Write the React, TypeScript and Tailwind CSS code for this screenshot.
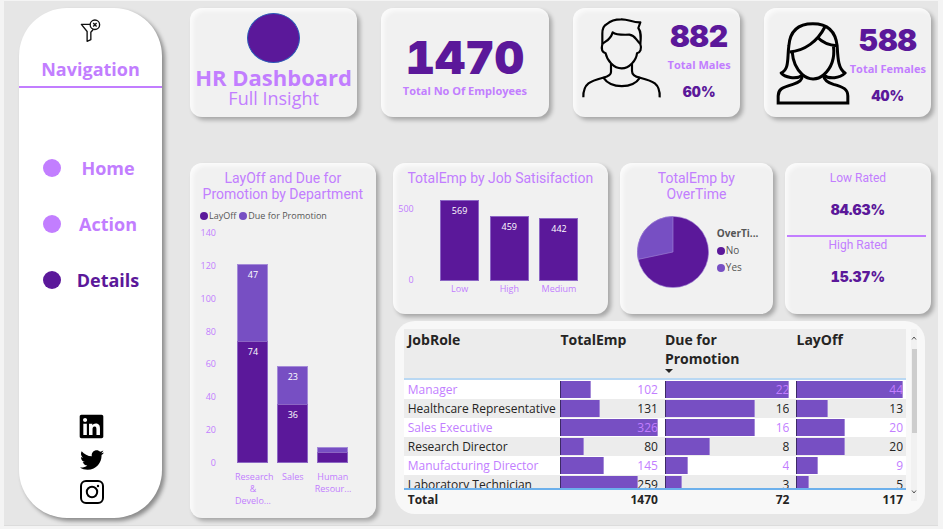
import type { ReactNode } from "react";
import { FaLinkedin, FaTwitter } from "react-icons/fa";

const card =
  "rounded-xl bg-[#f1f1f1] shadow-[3px_3px_4px_rgba(0,0,0,0.28),inset_3px_3px_4px_rgba(255,255,255,0.7)]";
const heading = "text-center font-[Roboto,sans-serif] leading-4 text-[#c27eff]";
const strong = "font-[Inter,sans-serif] font-black tabular-nums text-[#5b189a]";
const caption = "text-[11px] leading-4 font-bold whitespace-nowrap text-[#c27eff]";

function FilterIcon() {
  return (
    <svg viewBox="240 56 62 68" className="h-[23px] w-[21px]" fill="none" stroke="#111" strokeWidth="4">
      <path d="M270 72H244L261 93V122L272 117V95L279 87" strokeLinejoin="round" />
      <circle cx="284" cy="73" r="14" />
      <path d="M279 68L289 78M289 68L279 78" />
    </svg>
  );
}

function InstagramIcon() {
  return (
    <svg viewBox="0 0 24 24" className="size-6" fill="none" stroke="#000" strokeWidth="2">
      <rect x="1" y="1" width="22" height="22" rx="5" />
      <circle cx="12" cy="12" r="5.2" />
      <circle cx="18" cy="6" r="1.2" fill="#000" stroke="none" />
    </svg>
  );
}

function MaleIcon() {
  return (
    <svg viewBox="60 50 243 243" className="size-[81px] shrink-0" fill="none" stroke="#000" strokeWidth="6.5" strokeLinejoin="round">
      <path d="M124 131V100C124 84 129 75 138 71C150 60 165 57 180 57C202 56 214 67 238 66L232 83C241 95 240 110 238 131" />
      <path d="M124 131C135 121 148 120 155 96C165 104 182 104 205 103C222 105 222 115 238 131" />
      <path d="M124 131C120 147 124 156 134 159C138 180 158 204 182 204C205 204 226 180 228 159C238 156 243 145 238 131" />
      <path d="M150 190V215C150 226 135 230 127 232C90 242 66 248 67 291" />
      <path d="M213 190V212C213 226 226 230 237 232C275 242 298 248 296 291" />
      <path d="M127 232C150 266 215 266 237 232" />
    </svg>
  );
}

function FemaleIcon() {
  return (
    <svg viewBox="80 60 221 252" className="h-[84px] w-[74px] shrink-0" fill="none" stroke="#000" strokeWidth="9">
      <path d="M160 222C138 238 105 228 95 216C120 205 113 170 118 135C121 92 143 68 190 68C238 68 259 95 263 135C265 170 266 205 287 216C270 232 240 236 222 222" strokeLinejoin="round" />
      <path d="M120 153C165 150 205 120 226 78M203 108C222 128 243 133 262 134" />
      <path d="M128 152C130 180 138 202 158 220C178 238 203 238 222 222C247 200 256 170 252 136" />
      <path d="M159 222C158 238 150 244 130 250C98 259 86 265 86 285V306H295V285C295 265 282 258 252 250C232 244 224 236 222 224" />
    </svg>
  );
}

function PersonCard({ icon, count, label, percent, pad }: { icon: ReactNode; count: string; label: string; percent: string; pad: string }) {
  return (
    <section className={`${card} flex justify-between ${pad}`}>
      {icon}
      <div className="mt-px flex flex-col items-center">
        <p className={`${strong} text-[30px] leading-9`}>{count}</p>
        <p className={`${caption} mt-[3px]`}>{label}</p>
        <p className={`${strong} mt-[11px] text-[14px] leading-4`}>{percent}</p>
      </div>
    </section>
  );
}

const navItems = [
  { name: "Home", active: false, space: "mt-[66px]" },
  { name: "Action", active: false, space: "mt-7" },
  { name: "Details", active: true, space: "mt-7" },
];

function Sidebar() {
  return (
    <aside className="flex w-[143px] shrink-0 flex-col rounded-[48px] bg-white shadow-[3px_3px_4px_rgba(0,0,0,0.4)]">
      <button aria-label="Clear filters" className="mx-auto mt-[11px]">
        <FilterIcon />
      </button>
      <h2 className="mt-[14px] border-b-2 border-[#c27eff] pb-1 text-center text-[18px] leading-[26px] font-bold text-[#c27eff]">
        Navigation
      </h2>
      <nav className="flex flex-col pl-6">
        {navItems.map((n) => (
          <a key={n.name} href="#" className={`flex items-center gap-[10px] ${n.space} ${n.active ? "text-[#5b189a]" : "text-[#c27eff]"}`}>
            <span className="size-[18px] rounded-full bg-current" />
            <span className="w-[74px] text-center text-[18px] leading-7 font-bold">{n.name}</span>
          </a>
        ))}
      </nav>
      <div className="mt-auto mb-[14px] flex flex-col items-center gap-2 pl-[2px] text-black">
        <a href="#" aria-label="LinkedIn"><FaLinkedin className="size-[27px]" /></a>
        <a href="#" aria-label="Twitter"><FaTwitter className="size-6" /></a>
        <a href="#" aria-label="Instagram"><InstagramIcon /></a>
      </div>
    </aside>
  );
}

const departments = [
  { name: "Research & Develo...", layoff: 74, due: 47, labels: true },
  { name: "Sales", layoff: 36, due: 23, labels: true },
  { name: "Human Resour...", layoff: 7, due: 2, labels: false },
];

function DepartmentChart() {
  const unit = 230 / 140;
  return (
    <section className={`${card} pt-[7px]`}>
      <h3 className={`${heading} px-2 text-[14px]`}>LayOff and Due for Promotion by Department</h3>
      <div className="mt-[7px] flex items-center pl-[10px] text-[9px] leading-[14px] text-[#555]">
        <span className="mr-px size-2 rounded-full bg-[#5b189a]" />
        LayOff
        <span className="mr-px ml-[3px] size-2 rounded-full bg-[#774fc3]" />
        Due for Promotion
      </div>
      <div className="mt-1 flex text-[9px]">
        <div className="flex h-[242px] w-[26px] shrink-0 flex-col justify-between self-start text-right leading-3 text-[#c27eff]">
          {[140, 120, 100, 80, 60, 40, 20, 0].map((t) => <span key={t}>{t}</span>)}
        </div>
        <div className="mt-[6px] mr-[23px] ml-[17px] grid flex-1 grid-cols-3">
          {departments.map((d) => (
            <div key={d.name} className="flex flex-col items-center">
              <div className="flex h-[230px] w-[31px] flex-col justify-end text-center leading-3 text-white">
                <div className="border border-b-0 border-[#a58bd8] bg-[#774fc3] pt-1" style={{ height: d.due * unit }}>{d.labels && d.due}</div>
                <div className="border border-[#8c66c4] bg-[#5b189a] pt-1" style={{ height: d.layoff * unit }}>{d.labels && d.layoff}</div>
              </div>
              <span className="mt-2 w-9 text-center leading-3 text-[#c27eff]">{d.name}</span>
            </div>
          ))}
        </div>
      </div>
    </section>
  );
}

function SatisfactionChart() {
  const data = [["Low", 569], ["High", 459], ["Medium", 442]] as const;
  return (
    <section className={`${card} pt-[7px]`}>
      <h3 className={`${heading} text-[14px]`}>TotalEmp by Job Satisifaction</h3>
      <div className="mt-[14px] flex text-[9px] leading-3">
        <div className="mt-[3px] flex h-[83px] w-[21px] flex-col justify-between text-right text-[#c27eff]">
          <span>500</span>
          <span>0</span>
        </div>
        <div className="mr-6 ml-[21px] grid flex-1 grid-cols-3">
          {data.map(([name, value]) => (
            <div key={name} className="flex flex-col items-center">
              <div className="flex h-[81px] w-[39px] flex-col justify-end">
                <div className="border border-[#8c66c4] bg-[#5b189a] pt-1 text-center text-white" style={{ height: value * 0.142 }}>{value}</div>
              </div>
              <span className="mt-[2px] text-[#c27eff]">{name}</span>
            </div>
          ))}
        </div>
      </div>
    </section>
  );
}

function OvertimeChart() {
  return (
    <section className={`${card} pt-[7px]`}>
      <h3 className={`${heading} px-6 text-[14px]`}>TotalEmp by OverTime</h3>
      <div className="mt-[14px] flex gap-2 pl-[17px]">
        <svg viewBox="0 0 72 72" className="size-[72px] shrink-0" stroke="#a58bd8" strokeWidth="0.6">
          <circle cx="36" cy="36" r="35.6" fill="#5b189a" />
          <path d="M36 36L1.2 43.4A35.6 35.6 0 0 1 36 0.4Z" fill="#774fc3" />
        </svg>
        <div className="mt-[9px] text-[10px] leading-[17px] text-[#555]">
          <p className="font-bold">OverTi...</p>
          <p className="flex items-center gap-px"><span className="size-2 rounded-full bg-[#5b189a]" />No</p>
          <p className="flex items-center gap-px"><span className="size-2 rounded-full bg-[#774fc3]" />Yes</p>
        </div>
      </div>
    </section>
  );
}

function RatingCard() {
  return (
    <section className={`${card} pt-[7px] text-center`}>
      <h3 className={`${heading} text-[12px]`}>Low Rated</h3>
      <p className={`${strong} mt-4 text-[14px] leading-4`}>84.63%</p>
      <hr className="mt-[17px] mr-[5px] ml-[2px] border-t-2 border-[#c27eff]" />
      <h3 className={`${heading} text-[12px]`}>High Rated</h3>
      <p className={`${strong} mt-4 text-[14px] leading-4`}>15.37%</p>
    </section>
  );
}

const roles: [string, number, number, number][] = [
  ["Manager", 102, 22, 44],
  ["Healthcare Representative", 131, 16, 13],
  ["Sales Executive", 326, 16, 20],
  ["Research Director", 80, 8, 20],
  ["Manufacturing Director", 145, 4, 9],
  ["Laboratory Technician", 259, 3, 5],
];

function BarCell({ value, max, height }: { value: number; max: number; height: string }) {
  return (
    <td className="p-0 pr-[3px] pl-1">
      <div className={`grid overflow-hidden ${height}`}>
        <span className="col-start-1 row-start-1 mt-px h-[17px] border-r border-l border-r-[#a58bd8] border-l-[#3d2a66] bg-[#774fc3]" style={{ width: `${(value / max) * 100}%` }} />
        <span className="col-start-1 row-start-1 text-right">{value}</span>
      </div>
    </td>
  );
}

function RoleTable() {
  return (
    <section className="mr-[6px] ml-[2px] flex gap-[5px] rounded-[20px] bg-[#f8f8f8] pt-2 pr-2 pb-[5px] pl-[9px]">
      <table className="flex-1 table-fixed border-collapse text-[12px] leading-[19px] text-[#252423]">
        <colgroup>
          <col className="w-[30.4%]" />
          <col className="w-[20.8%]" />
          <col className="w-[26.2%]" />
          <col className="w-[22.6%]" />
        </colgroup>
        <thead>
          <tr className="h-[50px] border-b-2 border-[#b9d8f3] bg-[#ececec] text-left align-top text-[14px]">
            <th className="p-0 pt-px pl-1">JobRole</th>
            <th className="p-0 pt-px pl-1">TotalEmp</th>
            <th className="p-0 pt-px pl-1">
              Due for Promotion
              <span className="mt-px block h-0 w-0 border-x-4 border-t-4 border-x-transparent border-t-[#252423]" />
            </th>
            <th className="p-0 pt-px pl-1">LayOff</th>
          </tr>
        </thead>
        <tbody>
          {roles.map(([role, emp, due, layoff], i) => {
            const height = i === roles.length - 1 ? "h-[13px]" : "h-[19px]";
            return (
              <tr key={role} className={i % 2 ? "bg-[#ececec]" : "bg-white text-[#c27eff]"}>
                <td className="p-0 pl-1"><div className={`overflow-hidden whitespace-nowrap ${height}`}>{role}</div></td>
                <BarCell value={emp} max={326} height={height} />
                <BarCell value={due} max={22} height={height} />
                <BarCell value={layoff} max={44} height={height} />
              </tr>
            );
          })}
        </tbody>
        <tfoot>
          <tr className="border-t-2 border-[#6cb0ec] text-right font-bold">
            <td className="p-0 pl-1 text-left">Total</td>
            <td className="p-0 pr-[3px]">1470</td>
            <td className="p-0 pr-[3px]">72</td>
            <td className="p-0 pr-[3px]">117</td>
          </tr>
        </tfoot>
      </table>
      <div className="mb-2 flex w-[6px] flex-col items-center bg-[#f1f1f1]">
        <svg viewBox="0 0 6 6" className="mt-[6px] size-[6px]" fill="none" stroke="#555"><path d="M1 4.5L3 2L5 4.5" /></svg>
        <div className="mt-2 h-[84px] w-[5px] bg-[#cdcdcd]" />
        <svg viewBox="0 0 6 6" className="mt-auto mb-[6px] size-[6px]" fill="none" stroke="#555"><path d="M1 1.5L3 4L5 1.5" /></svg>
      </div>
    </section>
  );
}

export default function App() {
  return (
    <div className="flex min-h-screen bg-[#f4f4f4] pt-px pr-[5px] pb-[3px] pl-1 font-['Open_Sans',sans-serif]">
      <div className="flex flex-1 gap-7 border-b border-[#dcdcdc] bg-[#e6e6e6] pt-[7px] pr-[7px] pb-[7px] pl-[15px]">
        <Sidebar />
        <main className="flex min-w-0 flex-1 flex-col">
          <div className="grid h-[109px] grid-cols-4 gap-6">
            <section className={`${card} flex flex-col items-center pt-[5px]`}>
              <div className="h-[50px] w-[53px] rounded-[50%] border border-[#2a5cb8] bg-[#5b189a]" />
              <h1 className="mt-[2px] text-[22px] leading-6 font-bold whitespace-nowrap text-[#c27eff]">HR Dashboard</h1>
              <p className="text-[18px] leading-[18px] text-[#c27eff]">Full Insight</p>
            </section>
            <section className={`${card} flex flex-col items-center pt-[25px]`}>
              <p className={`${strong} text-[46px] leading-[48px]`}>1470</p>
              <p className={`${caption} mt-[2px]`}>Total No Of Employees</p>
            </section>
            <PersonCard icon={<MaleIcon />} count="882" label="Total Males" percent="60%" pad="pt-[9px] pl-2 pr-[9px]" />
            <PersonCard icon={<FemaleIcon />} count="588" label="Total Females" percent="40%" pad="pt-[13px] pl-3 pr-2" />
          </div>
          <div className="mt-[46px] grid flex-1 grid-cols-[186fr_539fr] gap-[17px]">
            <DepartmentChart />
            <div className="flex flex-col">
              <div className="grid h-[151px] grid-cols-[215fr_153fr_146fr] gap-3">
                <SatisfactionChart />
                <OvertimeChart />
                <RatingCard />
              </div>
              <div className="mt-[7px]">
                <RoleTable />
              </div>
            </div>
          </div>
        </main>
      </div>
    </div>
  );
}
